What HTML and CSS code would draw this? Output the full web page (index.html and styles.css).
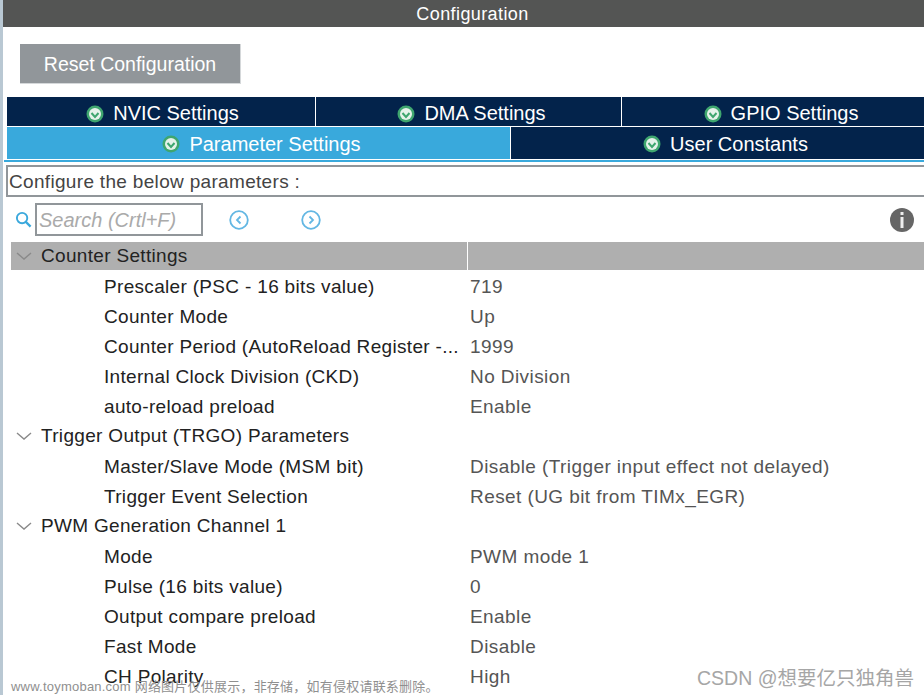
FILE: index.html
```html
<!DOCTYPE html>
<html lang="zh-CN">
<head>
  <meta charset="UTF-8">
  <title>Configuration</title>
  <link rel="stylesheet" href="styles.css">
</head>
<body>
<div class="page">
  <div class="title-bar">Configuration</div>

  <div class="reset-area">
    <button class="reset-button">Reset Configuration</button>
  </div>

  <!-- tabs -->
  <div class="tabs tabs-top">
    <div class="tab tab-nvic"><svg class="ok-icon" viewBox="0 0 18 18"><circle cx="9" cy="9" r="8.5" fill="#3fa66f"/><circle cx="9" cy="9" r="6" fill="#e6f2ea"/><path d="M5.5 8l3.5 4 3.5-4" fill="none" stroke="#3fa66f" stroke-width="2"/></svg>NVIC Settings</div>
    <div class="tab tab-dma"><svg class="ok-icon" viewBox="0 0 18 18"><circle cx="9" cy="9" r="8.5" fill="#3fa66f"/><circle cx="9" cy="9" r="6" fill="#e6f2ea"/><path d="M5.5 8l3.5 4 3.5-4" fill="none" stroke="#3fa66f" stroke-width="2"/></svg>DMA Settings</div>
    <div class="tab tab-gpio"><svg class="ok-icon" viewBox="0 0 18 18"><circle cx="9" cy="9" r="8.5" fill="#3fa66f"/><circle cx="9" cy="9" r="6" fill="#e6f2ea"/><path d="M5.5 8l3.5 4 3.5-4" fill="none" stroke="#3fa66f" stroke-width="2"/></svg>GPIO Settings</div>
  </div>
  <div class="tabs tabs-bottom">
    <div class="tab active"><svg class="ok-icon" viewBox="0 0 18 18"><circle cx="9" cy="9" r="8.5" fill="#3fa66f"/><circle cx="9" cy="9" r="6" fill="#e6f2ea"/><path d="M5.5 8l3.5 4 3.5-4" fill="none" stroke="#3fa66f" stroke-width="2"/></svg>Parameter Settings</div>
    <div class="tab tab-user"><svg class="ok-icon" viewBox="0 0 18 18"><circle cx="9" cy="9" r="8.5" fill="#3fa66f"/><circle cx="9" cy="9" r="6" fill="#e6f2ea"/><path d="M5.5 8l3.5 4 3.5-4" fill="none" stroke="#3fa66f" stroke-width="2"/></svg>User Constants</div>
  </div>
  <div class="tab-line"></div>

  <div class="describe">Configure the below parameters :</div>

  <!-- search -->
  <div class="search-row">
    <svg class="search-icon" viewBox="0 0 18 18"><circle cx="7.5" cy="7.5" r="5.5" fill="none" stroke="#3aa8dc" stroke-width="2"/><path d="M11.5 11.5l5 5" stroke="#3aa8dc" stroke-width="2.4"/></svg>
    <div class="search-box">Search (Crtl+F)</div>
    <svg class="nav-icon" viewBox="0 0 20 20"><circle cx="10" cy="10" r="8.8" fill="none" stroke="#63b7e3" stroke-width="1.8"/><path d="M11.5 6.5L8 10l3.5 3.5" fill="none" stroke="#63b7e3" stroke-width="1.8"/></svg>
    <svg class="nav-icon" viewBox="0 0 20 20"><circle cx="10" cy="10" r="8.8" fill="none" stroke="#63b7e3" stroke-width="1.8"/><path d="M8.5 6.5L12 10l-3.5 3.5" fill="none" stroke="#63b7e3" stroke-width="1.8"/></svg>
    <svg class="info-icon" viewBox="0 0 24 24"><circle cx="12" cy="12" r="12" fill="#666"/><rect x="10.5" y="4" width="3" height="3" fill="#eee"/><rect x="10.5" y="9" width="3" height="11" fill="#eee"/></svg>
  </div>

  <!-- parameter tree -->
  <div class="tree">
    <div class="row section first"><span class="name"><svg class="chevron" viewBox="0 0 16 9"><path d="M1 1l7 6 7-6" fill="none" stroke="#8a8a8a" stroke-width="1.4"/></svg>Counter Settings</span><span class="value"></span></div>
    <div class="row"><span class="name">Prescaler (PSC - 16 bits value)</span><span class="value">719</span></div>
    <div class="row"><span class="name">Counter Mode</span><span class="value">Up</span></div>
    <div class="row"><span class="name">Counter Period (AutoReload Register -...</span><span class="value">1999</span></div>
    <div class="row"><span class="name">Internal Clock Division (CKD)</span><span class="value">No Division</span></div>
    <div class="row"><span class="name">auto-reload preload</span><span class="value">Enable</span></div>
    <div class="row section"><span class="name"><svg class="chevron" viewBox="0 0 16 9"><path d="M1 1l7 6 7-6" fill="none" stroke="#8a8a8a" stroke-width="1.4"/></svg>Trigger Output (TRGO) Parameters</span><span class="value"></span></div>
    <div class="row"><span class="name">Master/Slave Mode (MSM bit)</span><span class="value">Disable (Trigger input effect not delayed)</span></div>
    <div class="row"><span class="name">Trigger Event Selection</span><span class="value">Reset (UG bit from TIMx_EGR)</span></div>
    <div class="row section"><span class="name"><svg class="chevron" viewBox="0 0 16 9"><path d="M1 1l7 6 7-6" fill="none" stroke="#8a8a8a" stroke-width="1.4"/></svg>PWM Generation Channel 1</span><span class="value"></span></div>
    <div class="row"><span class="name">Mode</span><span class="value">PWM mode 1</span></div>
    <div class="row"><span class="name">Pulse (16 bits value)</span><span class="value">0</span></div>
    <div class="row"><span class="name">Output compare preload</span><span class="value">Enable</span></div>
    <div class="row"><span class="name">Fast Mode</span><span class="value">Disable</span></div>
    <div class="row"><span class="name">CH Polarity</span><span class="value">High</span></div>
  </div>
</div>

<div class="mark-left">www.toymoban.com 网络图片仅供展示，非存储，如有侵权请联系删除。</div>
<div class="mark-right">CSDN @想要亿只独角兽</div>
</body>
</html>
```

FILE: styles.css
```css
html, body {
  height: 100%;
}
body {
  margin: 0;
  background-color: #fff;
  font-family: "Liberation Sans", "Noto Sans CJK SC", sans-serif;
  font-size: 19px;
  color: #222;
  overflow: hidden;
  position: relative;
}
.page {
  border-left: 3px solid #b9c8d3;
  height: 695px;
  box-sizing: border-box;
  overflow: hidden;
}
.title-bar {
  height: 27px;
  line-height: 28px;
  padding-left: 18px;
  background-color: #545554;
  color: #fff;
  font-size: 18px;
  text-align: center;
  letter-spacing: 0.4px;
}
.reset-area {
  padding: 17px 0 13px 17px;
}
.reset-button {
  display: block;
  width: 221px;
  height: 40px;
  padding: 2px 0 0;
  background-color: #91969a;
  border: none;
  border-right: 1px solid #d5d8da;
  border-bottom: 1px solid #d5d8da;
  color: #fff;
  font-family: inherit;
  font-size: 19.5px;
}

/* tabs */
.tabs {
  display: grid;
  margin-left: 4px;
  column-gap: 1px;
  background-color: #fff;
}
.tabs-top {
  grid-template-columns: 308px 305px 1fr;
  height: 29px;
  margin-bottom: 1px;
}
.tabs-bottom {
  grid-template-columns: 503px 1fr;
  height: 32px;
}
.tab {
  display: flex;
  align-items: center;
  justify-content: center;
  box-sizing: border-box;
  background-color: #03234b;
  color: #fff;
  font-size: 20px;
}
.tabs-top .tab {
  padding-top: 4px;
}
.tabs-bottom .tab {
  padding-top: 2px;
}
.tab.active {
  background-color: #39a9dc;
  padding-left: 6px;
}
.tab-nvic {
  padding-left: 3px;
}
.tab-dma {
  padding-left: 6px;
}
.tab-gpio,
.tab-user {
  padding-left: 16px;
}
.ok-icon {
  width: 18px;
  height: 18px;
  margin-right: 9px;
}
.tab-line {
  height: 2px;
  margin: 1px 0 3px 1px;
  background-color: #39a9dc;
}
.describe {
  height: 28px;
  line-height: 30px;
  margin-left: 3px;
  padding-left: 1px;
  border: 2px solid #91969a;
  border-right: none;
  color: #444;
  letter-spacing: 0.32px;
  white-space: nowrap;
}

.search-row {
  display: flex;
  align-items: center;
  height: 33px;
  margin-top: 6px;
  padding: 0 10px 0 12px;
}
.search-icon {
  width: 17px;
  height: 17px;
  margin-right: 3px;
}
.search-box {
  width: 162px;
  height: 29px;
  line-height: 30px;
  padding-left: 2px;
  border: 2px solid #91969a;
  color: #aaa;
  font-size: 20px;
  font-style: italic;
  white-space: nowrap;
}
.nav-icon {
  width: 20px;
  height: 20px;
  margin-left: 26px;
}
.nav-icon + .nav-icon {
  margin-left: 52px;
}
.info-icon {
  width: 24px;
  height: 24px;
  margin-left: auto;
}

/* parameter tree */
.tree {
  margin-top: 6px;
  margin-left: 8px;
}
.row {
  display: grid;
  grid-template-columns: 456px 1fr;
  height: 30px;
  line-height: 32px;
  letter-spacing: 0.32px;
  white-space: nowrap;
}
.row .name {
  padding-left: 93px;
  overflow: hidden;
}
.row .value {
  padding-left: 3px;
  color: #555;
  letter-spacing: 0.42px;
}
.row.section .name {
  display: flex;
  align-items: center;
  padding-left: 5px;
}
.chevron {
  width: 16px;
  height: 9px;
  margin-right: 9px;
}
.row.first {
  height: 28px;
  line-height: 30px;
  margin-bottom: 1px;
  column-gap: 1px;
}
.row.first .name,
.row.first .value {
  background-color: #afafaf;
}

/* watermarks lying over the picture */
.mark-left {
  position: absolute;
  left: 11px;
  top: 676px;
  font-size: 13px;
  letter-spacing: 0.22px;
  color: #8f8f8f;
  white-space: nowrap;
}
.mark-right {
  position: absolute;
  left: 697px;
  top: 662px;
  font-size: 19.5px;
  color: #a6a6a6;
  white-space: nowrap;
}
```
